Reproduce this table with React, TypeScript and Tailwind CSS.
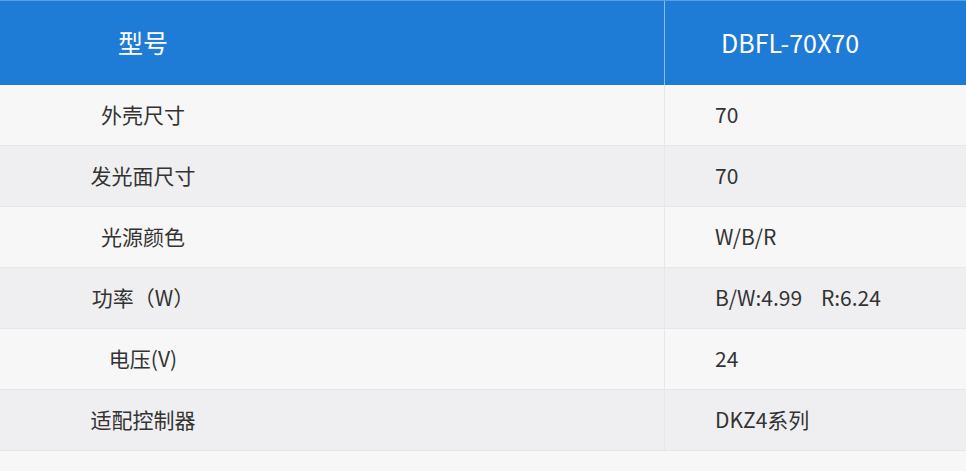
const rows = [
  { label: "外壳尺寸", value: "70" },
  { label: "发光面尺寸", value: "70" },
  { label: "光源颜色", value: "W/B/R" },
  { label: "功率（W）", value: "B/W:4.99\u00a0\u00a0\u00a0\u00a0R:6.24" },
  { label: "电压(V)", value: "24" },
  { label: "适配控制器", value: "DKZ4系列" },
];

export default function App() {
  return (
    <div
      className="w-[966px] h-[471px] bg-[#f7f7f7] text-[#333]"
      style={{ fontFamily: '"Noto Sans CJK SC", "Noto Sans", sans-serif' }}
    >
      {/* header */}
      <div className="flex h-[85px] bg-[#1e7bd6] border-t border-[#5d9de0] text-white text-[25px]">
        <div className="w-[664px] flex items-center">
          <div className="w-[286px] text-center">型号</div>
        </div>
        <div className="flex-1 flex items-center border-l border-[#8dbbe9] pl-[56px]">
          DBFL-70X70
        </div>
      </div>

      {/* body */}
      {rows.map((r, i) => (
        <div
          key={r.label}
          className={
            "flex h-[61px] text-[21px] border-b border-[#e7e7e9] " +
            (i % 2 === 0 ? "bg-[#f7f7f7]" : "bg-[#efeff1]")
          }
        >
          <div className="w-[664px] flex items-center">
            <div className="w-[286px] text-center">{r.label}</div>
          </div>
          <div className="flex-1 flex items-center border-l border-[#e7e7e9] pl-[50px]">
            {r.value}
          </div>
        </div>
      ))}
    </div>
  );
}
